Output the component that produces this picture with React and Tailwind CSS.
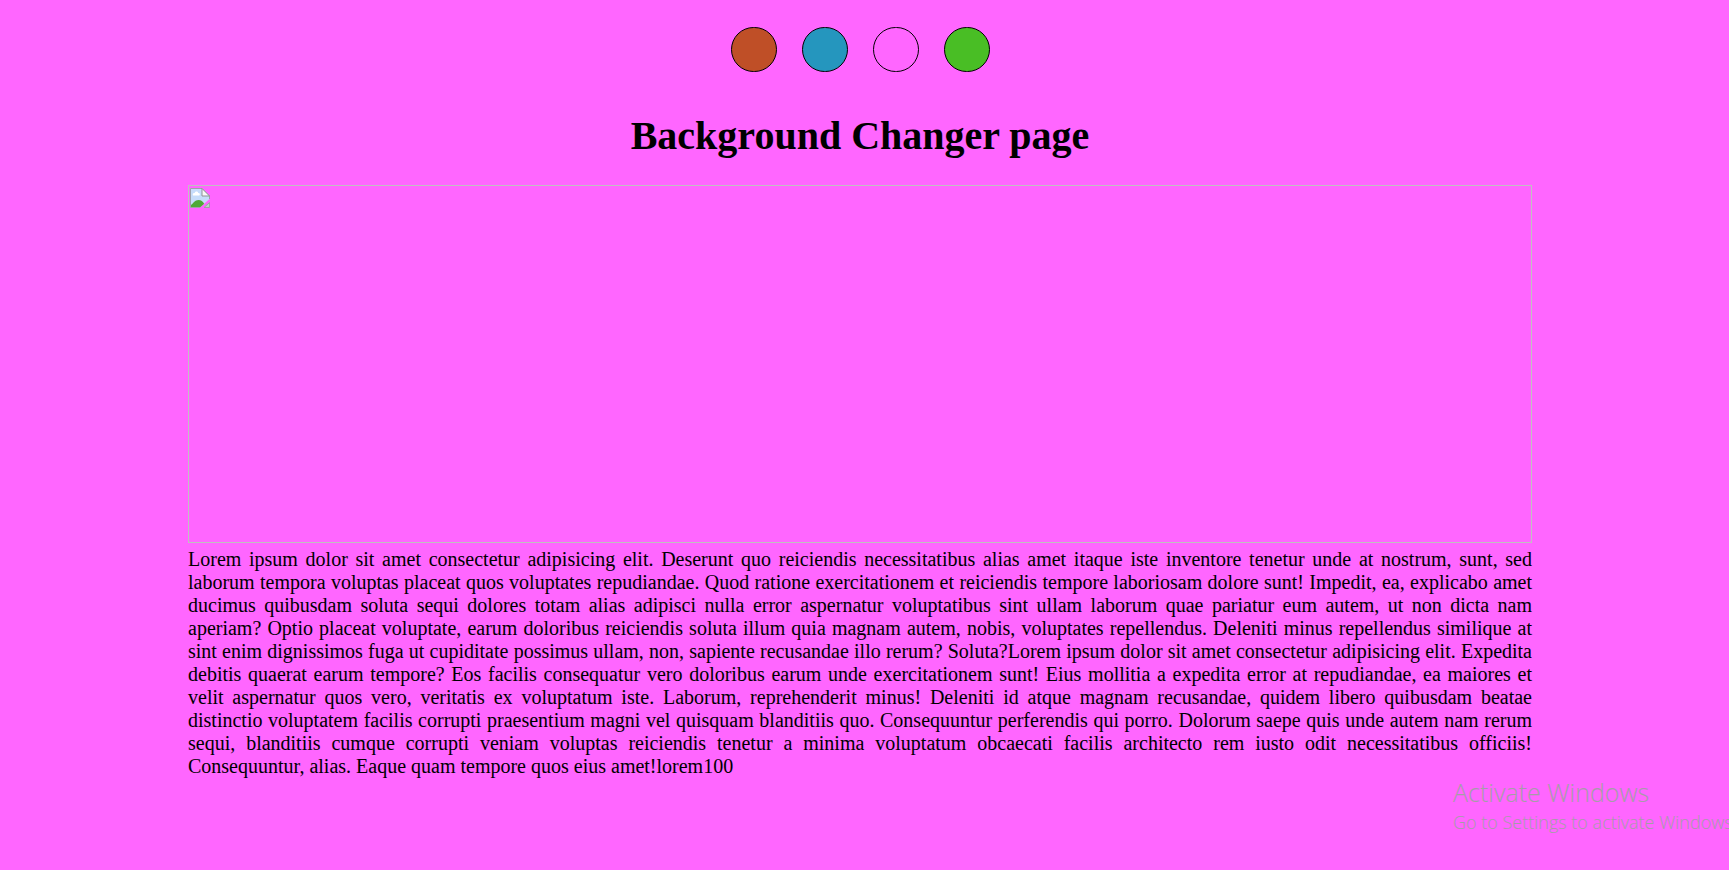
import { useState } from "react";

const swatches = [
  { name: "Brown", color: "#bf4f27", fill: "bg-[#bf4f27]" },
  { name: "Blue", color: "#2596be", fill: "bg-[#2596be]" },
  { name: "Pink", color: "#ff66ff", fill: "bg-transparent" },
  { name: "Green", color: "#49be25", fill: "bg-[#49be25]" },
];

function MissingImageIcon() {
  return (
    <svg viewBox="0 0 20 20" className="size-5" aria-hidden="true">
      <path d="M0.5 0.5H12L19.5 8V11L10 19.5H0.5Z" fill="#c6dcfa" />
      <path d="M1 19.5V17C3.5 15 5 12 8.5 12C11 12 13 13.5 14.2 15.7L10 19.5Z" fill="#4fa936" />
      <path d="M3 7.5C2.2 6 3.4 4.8 4.6 5.2C5 3 7.8 3 8.2 5C10 4.8 10.4 7 9.2 7.5Z" fill="#fff" />
      <path d="M10 19.5H0.5V0.5H12L19.5 8V11" fill="none" stroke="#a0a0a8" />
      <path d="M12 0.5V8H19.5Z" fill="#f8f8f8" stroke="#8f8f96" />
      <path d="M14 19.5L19.5 14.5V19.5Z" fill="#b9d5c4" stroke="#a0a0a8" />
    </svg>
  );
}

export default function App() {
  const [background, setBackground] = useState("#ff66ff");

  return (
    <div
      className="relative min-h-screen overflow-hidden pt-[27px] pr-[197px] pb-20 pl-[188px] font-['Liberation_Serif',serif] text-black"
      style={{ backgroundColor: background }}
    >
      <div className="flex justify-center gap-[25px]">
        {swatches.map(({ name, color, fill }) => (
          <button
            key={name}
            type="button"
            aria-label={name}
            onClick={() => setBackground(color)}
            className={`h-[45px] w-[46px] cursor-pointer rounded-full border border-black ${fill}`}
          />
        ))}
      </div>
      <main>
        <h1 className="mt-[41px] mb-[26px] text-center text-[40px] leading-[46px] font-bold">
          Background Changer page
        </h1>
        <div className="h-[358px] border border-[#c0c0c0] px-px py-0.5">
          <MissingImageIcon />
        </div>
        <p className="mt-[5px] text-justify text-[20px] leading-[23px]">
          Lorem ipsum dolor sit amet consectetur adipisicing elit. Deserunt quo reiciendis necessitatibus alias amet
          itaque iste inventore tenetur unde at nostrum, sunt, sed laborum tempora voluptas placeat quos voluptates
          repudiandae. Quod ratione exercitationem et reiciendis tempore laboriosam dolore sunt! Impedit, ea, explicabo
          amet ducimus quibusdam soluta sequi dolores totam alias adipisci nulla error aspernatur voluptatibus sint
          ullam laborum quae pariatur eum autem, ut non dicta nam aperiam? Optio placeat voluptate, earum doloribus
          reiciendis soluta illum quia magnam autem, nobis, voluptates repellendus. Deleniti minus repellendus
          similique at sint enim dignissimos fuga ut cupiditate possimus ullam, non, sapiente recusandae illo rerum?
          Soluta?Lorem ipsum dolor sit amet consectetur adipisicing elit. Expedita debitis quaerat earum tempore? Eos
          facilis consequatur vero doloribus earum unde exercitationem sunt! Eius mollitia a expedita error at
          repudiandae, ea maiores et velit aspernatur quos vero, veritatis ex voluptatum iste. Laborum, reprehenderit
          minus! Deleniti id atque magnam recusandae, quidem libero quibusdam beatae distinctio voluptatem facilis
          corrupti praesentium magni vel quisquam blanditiis quo. Consequuntur perferendis qui porro. Dolorum saepe
          quis unde autem nam rerum sequi, blanditiis cumque corrupti veniam voluptas reiciendis tenetur a minima
          voluptatum obcaecati facilis architecto rem iusto odit necessitatibus officiis! Consequuntur, alias. Eaque
          quam tempore quos eius amet!lorem100
        </p>
      </main>
      <aside className="pointer-events-none absolute right-0 bottom-[35px] w-[276px] font-['Open_Sans','Noto_Sans',sans-serif] font-light whitespace-nowrap text-[#a69ca8]">
        <p className="text-[25px] leading-[33px]">Activate Windows</p>
        <p className="text-[18px] leading-[26px]">Go to Settings to activate Windows</p>
      </aside>
    </div>
  );
}
